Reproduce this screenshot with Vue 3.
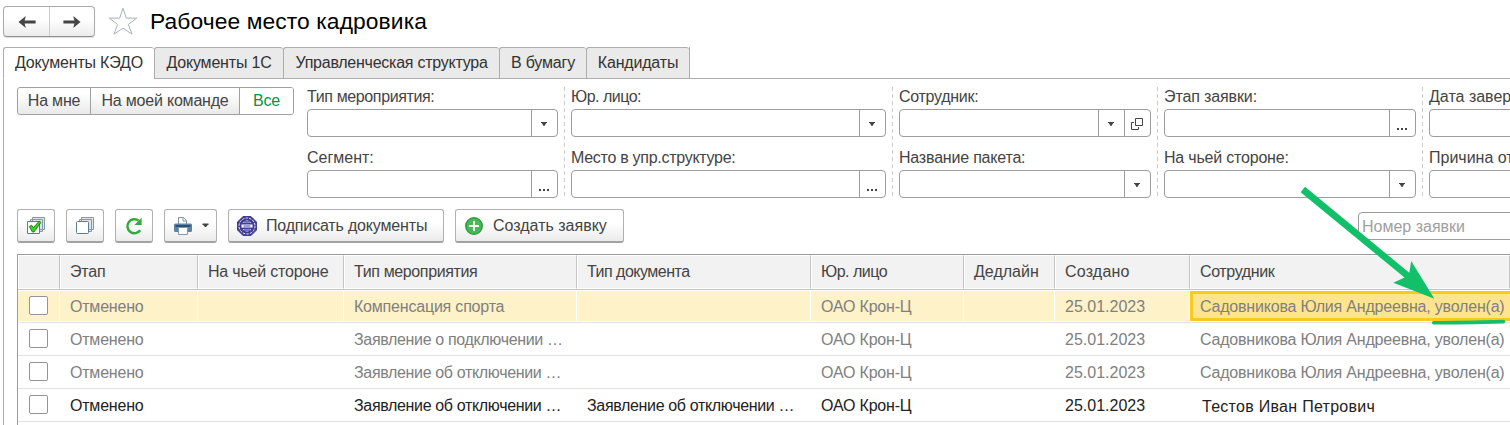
<script setup>
const tabs = [
  { label: 'Документы КЭДО', w: 'w151', active: true },
  { label: 'Документы 1С', w: 'w129' },
  { label: 'Управленческая структура', w: 'w216' },
  { label: 'В бумагу', w: 'w87' },
  { label: 'Кандидаты', w: 'w104' },
]
const filters = [
  [{ label: 'Тип мероприятия:', b: ['drop'], t: 't35' }, { label: 'Сегмент:', b: ['dots'], t: '' }],
  [{ label: 'Юр. лицо:', b: ['drop'], t: 't45' }, { label: 'Место в упр.структуре:', b: ['dots'], t: 't28' }],
  [{ label: 'Сотрудник:', b: ['drop', 'open'], t: 't28' }, { label: 'Название пакета:', b: ['drop'], t: 't20' }],
  [{ label: 'Этап заявки:', b: ['dots'], t: 't12' }, { label: 'На чьей стороне:', b: ['drop'], t: 't20' }],
  [{ label: 'Дата завер', b: ['drop'], t: '' }, { label: 'Причина от', b: ['drop'], t: '' }],
]
const heads = [
  ['', ''], ['Этап', 't20'], ['На чьей стороне', 't20'], ['Тип мероприятия', 't35'], ['Тип документа', 't45'],
  ['Юр. лицо', 't45'], ['Дедлайн', ''], ['Создано', 'w20'], ['Сотрудник', 't35'],
]
const fired = 'Садовникова Юлия Андреевна, уволен(а)'
const rows = [
  ['', 'Отменено', '', 'Компенсация спорта', '', 'ОАО Крон-Ц', '', '25.01.2023', fired],
  ['', 'Отменено', '', 'Заявление о подключении …', '', 'ОАО Крон-Ц', '', '25.01.2023', fired],
  ['', 'Отменено', '', 'Заявление об отключении …', '', 'ОАО Крон-Ц', '', '25.01.2023', fired],
  ['', 'Отменено', '', 'Заявление об отключении …', 'Заявление об отключении …', 'ОАО Крон-Ц', '', '25.01.2023', 'Тестов Иван Петрович'],
]
const tracking = (text) => {
  if (text.startsWith('Заявление')) return 't32'
  if (text.startsWith('25')) return ''
  if (text.startsWith('Тестов')) return 'w28'
  return 't20'
}
</script>

<template>
  <div class="page">
    <header class="top">
      <div class="nav">
        <button><svg width="18" height="12" viewBox="0 0 18 12"><path d="M.5 6 7.8 0 6.6 4.4H17.6V7.6H6.6L7.8 12Z" fill="#444" /></svg></button>
        <button><svg width="18" height="12" viewBox="0 0 18 12"><path d="M17.5 6 10.2 0 11.4 4.4H.4V7.6H11.4L10.2 12Z" fill="#444" /></svg></button>
      </div>
      <svg class="star" width="30" height="29" viewBox="0 0 30 29"><path d="M15 1.2 18.3 11.1H28.8L20.4 17.4 24 27.2 15 21.1 6 27.2 9.6 17.4 1.2 11.1H11.7Z" fill="#fff" stroke="#a9b0b8" /></svg>
      <h1>Рабочее место кадровика</h1>
    </header>

    <nav class="tabs">
      <div v-for="t in tabs" :key="t.label" class="tab" :class="[t.w, { active: t.active }]">{{ t.label }}</div>
      <div class="rest"></div>
    </nav>

    <main class="panel">
      <section class="filters">
        <div class="segment">
          <button>На мне</button><button>На моей команде</button><button class="on">Все</button>
        </div>
        <div v-for="(col, i) in filters" :key="i" class="fcol" :class="'f' + i">
          <div v-for="f in col" :key="f.label" class="field">
            <label :class="f.t">{{ f.label }}</label>
            <div class="input">
              <span class="value"></span>
              <span v-for="b in f.b" :key="b" class="btn">
                <svg v-if="b === 'drop'" width="26" height="26" viewBox="0 0 26 26"><path d="M10 12H16V13H15.3L13.4 16H12.6L10.7 13H10Z" fill="#444" /></svg>
                <svg v-else-if="b === 'dots'" width="26" height="26" viewBox="0 0 26 26"><path d="M8 18h2v2H8zM12 18h2v2h-2zM16 18h2v2h-2z" fill="#444" /></svg>
                <svg v-else width="26" height="26" viewBox="0 0 26 26" fill="none" stroke="#444"><path d="M11.5 8.5H18.5V15.5H11.5ZM10 12.5H7.5V19.5H14.5V17" /></svg>
              </span>
            </div>
          </div>
        </div>
      </section>

      <section class="toolbar">
        <button class="tb sq">
          <svg width="20" height="20" viewBox="0 0 20 20"><g fill="#dce5eb" stroke="#7f9aac"><path d="M6.5 1.5h12v12h-12zM4.5 3.5h12v12h-12z" /><path d="M1.5 5.5h12v12h-12z" fill="#fff" stroke="#5d7c93" /></g><path d="M3.3 10.5 5.5 9.2 7.4 11.7 13.2 5.2 15 6.3 8 16H6.4Z" fill="#36d620" stroke="#147a12" stroke-width=".9" /></svg>
        </button>
        <button class="tb sq">
          <svg width="20" height="20" viewBox="0 0 20 20"><g fill="#dce5eb" stroke="#7f9aac"><path d="M6.5 1.5h12v12h-12zM4.5 3.5h12v12h-12z" /><rect x="1.5" y="5.5" width="12" height="12" rx="1" fill="#fff" stroke="#5d7c93" /></g></svg>
        </button>
        <button class="tb sq">
          <svg width="20" height="20" viewBox="0 0 20 20"><path d="M16.2 14.2A7 7 0 1 1 14.6 4.6" fill="none" stroke="#35a83b" stroke-width="2.5" /><path d="M17.6 1.8V9H10.4Z" fill="#35a83b" /></svg>
        </button>
        <button class="tb print">
          <svg width="20" height="20" viewBox="0 0 20 20"><path d="M5.5 8V1.5H10.5L13.5 4.5V8" fill="#fff" stroke="#8193a0" /><path d="M10 1.5V5H13.5" fill="none" stroke="#8193a0" /><rect x="1" y="7.5" width="18" height="8.5" rx="1.5" fill="#5c83a7" /><path d="M2.5 10H17.5" stroke="#2d5070" stroke-width="2" /><path d="M5.5 11.5H14.5V18.5H5.5Z" fill="#fff" stroke="#7f98aa" /></svg>
          <svg class="caret" width="7" height="5" viewBox="0 0 7 5"><path d="M.5 .5H6.5V1.3L4 4H3L.5 1.3Z" fill="#444" /></svg>
        </button>
        <button class="tb sign">
          <svg width="22" height="22" viewBox="0 0 22 22"><path d="M7 1.5H15L20.5 7V15L15 20.5H7L1.5 15V7Z" fill="#403d93" stroke="#403d93" stroke-width="1" stroke-linejoin="round" /><circle cx="11" cy="11" r="8" fill="none" stroke="#fff" stroke-width=".9" stroke-dasharray="2.4 1.2" /><path d="M6.6 7.8Q11 3 15.4 7.8ZM6.6 14.2Q11 19 15.4 14.2ZM5.5 9.6H16.5V12.4H5.5Z" fill="#fff" /><path d="M8 6.9H14M7.5 11H14.5M8 15.1H14" stroke="#403d93" stroke-width="1.1" /></svg>
          <span>Подписать документы</span>
        </button>
        <button class="tb create">
          <svg width="18" height="18" viewBox="0 0 18 18"><circle cx="9" cy="9" r="8.3" fill="#47b957" stroke="#2b943b" stroke-width="1.3" /><path d="M9 4V14M4 9H14" stroke="#fff" stroke-width="2" /></svg>
          <span>Создать заявку</span>
        </button>
        <div class="search">Номер заявки</div>
      </section>

      <section class="table">
        <div class="row head">
          <div v-for="(h, i) in heads" :key="i" class="cell"><span :class="h[1]">{{ h[0] }}</span></div>
        </div>
        <div v-for="(r, ri) in rows" :key="ri" class="row" :class="{ current: ri === 0, live: ri === 3 }">
          <div v-for="(c, i) in r" :key="i" class="cell">
            <i v-if="i === 0" class="check"></i>
            <span v-else :class="tracking(c)">{{ c }}</span>
          </div>
        </div>
        <div class="row"></div>
      </section>
    </main>

    <svg class="mark" width="220" height="150" viewBox="1290 180 220 150">
      <path d="M1305 186.7 1409.3 272.8 1411.2 261 1434.4 298.7 1393.3 282.8 1404.5 277.5 1300.6 192.3Z" fill="#12c06a" />
      <path d="M1433.7 322.8Q1460 322.6 1503.5 321.6" fill="none" stroke="#12c06a" stroke-width="3.6" stroke-linecap="round" />
    </svg>
  </div>
</template>

<style>
body { margin: 0; overflow: hidden; background: #fff; }
</style>

<style scoped>
* { box-sizing: border-box; }
.page { position: relative; width: 1510px; height: 425px; overflow: hidden; background: #fff; color: #444; font: 16px/20px "Liberation Sans", Arial, sans-serif; white-space: nowrap; }
button { margin: 0; padding: 0; border: 0; background: none; font: inherit; color: inherit; letter-spacing: inherit; }
svg { display: block; flex: none; }
.t12 { letter-spacing: -.12px; }
.t20 { letter-spacing: -.2px; }
.t28 { letter-spacing: -.28px; }
.t32 { letter-spacing: -.34px; }
.t35 { letter-spacing: -.37px; }
.t45 { letter-spacing: -.5px; }
.w20 { letter-spacing: .2px; }
.w28 { letter-spacing: .28px; }
.top { display: flex; height: 47px; padding: 6px 0 0 3px; }
.nav { display: flex; width: 92px; height: 31px; border: 1px solid #aaa; border-bottom-color: #8d8d8d; border-radius: 4px; background: linear-gradient(#fff 40%, #ececec); box-shadow: 0 1px 1px #ddd; }
.nav button { flex: 1; display: flex; align-items: center; justify-content: center; padding-left: 1px; }
.nav button + button { border-left: 1px solid #ccc; padding-left: 0; }
.star { margin: 1px 0 0 13px; }
h1 { margin: 2px 0 0 12px; font-size: 22.8px; line-height: 26px; font-weight: 400; letter-spacing: .1px; color: #000; }
.tabs { display: flex; height: 32px; padding-left: 3px; letter-spacing: -.18px; }
.tab { height: 32px; border: 1px solid #adadad; border-right: 0; background: #eaeaea; text-align: center; line-height: 29px; color: #333; border-radius: 3px 3px 0 0; }
.tab.active { background: #fff; border-bottom-color: #fff; }
.rest { flex: 1; border-left: 1px solid #adadad; border-bottom: 1px solid #adadad; }
.w151 { width: 151px; } .w129 { width: 129px; } .w216 { width: 216px; letter-spacing: -.25px; } .w87 { width: 87px; } .w104 { width: 103px; }
.panel { height: 346px; border-left: 1px solid #adadad; margin-left: 3px; padding-left: 13px; }
.filters { display: flex; height: 130px; padding-top: 8px; overflow: hidden; }
.segment { display: flex; flex: none; width: 277px; height: 28px; border: 1px solid #a0a0a0; border-radius: 3px; overflow: hidden; background: linear-gradient(#fff 20%, #e9e9e9); letter-spacing: -.2px; }
.segment button { flex: 0 0 149px; border-right: 1px solid #a0a0a0; }
.segment button:first-child { flex-basis: 73px; }
.segment .on { flex: 1; border: 0; background: #fff; color: #009646; }
.fcol { flex: none; height: 111px; padding-left: 6px; background: repeating-linear-gradient(#ccc 0 4px, transparent 4px 7px) 0 0 / 1px 100% no-repeat; }
.f0 { width: 257px; margin-left: 13px; padding-left: 0; background: none; }
.f1 { width: 328px; } .f2 { width: 265px; } .f3 { width: 265px; } .f4 { width: 260px; }
.field { height: 61px; }
.fcol:not(.f0) .field { padding-left: 1px; }
label { display: block; height: 22px; line-height: 20px; }
.input { display: flex; height: 28px; margin-right: 6px; border: 1px solid #9c9c9c; border-radius: 4px; background: #fff; }
.value { flex: 1; }
.btn { width: 26px; border-left: 1px solid #9c9c9c; }
.btn svg { margin-left: -1px; }
.toolbar { display: flex; height: 45px; gap: 11px; }
.tb { display: flex; flex: none; align-items: center; justify-content: center; height: 34px; border: 1px solid #b0b0b0; border-bottom: 2px solid #a2a2a2; border-radius: 3px; background: linear-gradient(#fff 40%, #ebebeb); }
.sq { width: 38px; }
.print { width: 53px; gap: 9px; }
.sign { width: 216px; justify-content: flex-start; padding-left: 7px; gap: 8px; letter-spacing: -.17px; }
.create { width: 169px; justify-content: flex-start; padding-left: 9px; gap: 10px; }
.search { width: 212px; height: 28px; margin: 3px -60px 0 auto; padding-left: 3px; border: 1px solid #9c9c9c; border-radius: 4px; color: #a0a0a0; line-height: 27px; }
.table { height: 171px; border: solid #9c9c9c; border-width: 1px 0 0 1px; overflow: hidden; }
.row { display: grid; grid-template-columns: 42px 138px 146px 233px 234px 153px 91px 135px 1fr; height: 33px; border-bottom: 1px solid #e2e2e2; color: #808080; }
.cell { display: flex; align-items: center; padding: 2px 0 0 10px; overflow: hidden; }
.cell:first-child { padding: 0 0 0 11px; }
.head { height: 35px; border-bottom-color: #c4c4c4; color: #444; }
.head .cell { border: 1px solid #fff; border-right-color: #c4c4c4; background: #f2f2f2; padding: 0 0 0 9px; }
.current { background: #fff; padding: 1px 0; }
.current .cell { background: #fef2c8; border-right: 1px solid #fff; }
.current .cell:last-child { background: #ffe48f; border: 3px solid #fac91f; border-right: 0; padding-left: 7px; }
.live { color: #222; }
.live .cell:last-child { padding: 3px 0 0 12px; }
.check { width: 19px; height: 19px; border: 1px solid #949494; border-radius: 2px; background: #fff; margin-bottom: 1px; }
.mark { position: absolute; left: 1290px; top: 180px; }
</style>
